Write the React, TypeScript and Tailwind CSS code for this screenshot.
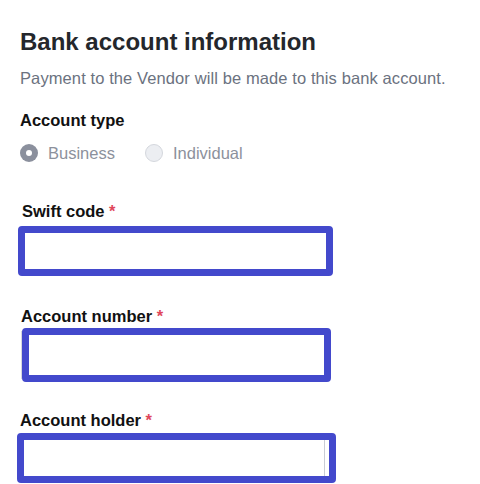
import * as React from "react";

function Label({ text, className }: { text: string; className?: string }) {
  return (
    <label className={"block text-[16.5px] font-bold leading-6 text-[#111111] " + (className ?? "")}>
      {text} <span className="text-[#e0475b]">*</span>
    </label>
  );
}

function Radio({ checked }: { checked: boolean }) {
  return (
    <span
      className={
        "flex h-[18px] w-[18px] items-center justify-center rounded-full " +
        (checked ? "bg-[#8b909d]" : "border border-[#d4d7dd] bg-[#eceef2]")
      }
    >
      {checked && <span className="h-[6px] w-[6px] rounded-full bg-white" />}
    </span>
  );
}

export default function App() {
  const [type, setType] = React.useState("business");

  return (
    <div className="min-h-[484px] bg-white pl-5 pt-[26px] font-['Liberation_Sans',Arial,sans-serif]">
      <h2 className="text-[24px] font-bold leading-8 text-[#24272c]">Bank account information</h2>
      <p className="mt-2 text-[16.5px] tracking-[0.1px] leading-6 text-[#6b7280]">
        Payment to the Vendor will be made to this bank account.
      </p>

      <div className="mt-[18px] text-[16.5px] font-bold leading-6 text-[#111111]">Account type</div>
      <div className="mt-[9px] flex h-6 items-center text-[16.5px] text-[#8c919c]">
        <button onClick={() => setType("business")} className="flex items-center">
          <Radio checked={type === "business"} />
          <span className="ml-[10px]">Business</span>
        </button>
        <button onClick={() => setType("individual")} className="ml-[30px] flex items-center">
          <Radio checked={type === "individual"} />
          <span className="ml-[10px]">Individual</span>
        </button>
      </div>

      <Label text="Swift code" className="ml-[2px] mt-[34px]" />
      <input className="ml-[-2px] mt-[3px] block h-[50px] w-[315px] rounded-[4px] border-[7px] border-[#4349cc] bg-white px-2 outline-none" />

      <Label text="Account number" className="ml-[1px] mt-[28px]" />
      <div className="ml-px flex items-stretch">
        <div className="mt-[3px] mb-[3px] w-px bg-[#d6d8de]" />
        <input className="block h-[54px] w-[309px] rounded-[4px] border-[7px] border-[#4349cc] bg-white px-2 outline-none" />
      </div>

      <Label text="Account holder" className="mt-[26px]" />
      <div className="relative ml-[-3px] mt-px w-[319px]">
        <input className="block h-[50px] w-[319px] rounded-[4px] border-[7px] border-[#4349cc] bg-white px-2 outline-none" />
        <div className="pointer-events-none absolute right-[11px] top-[7px] h-[36px] w-px bg-[#c9ccd4]" />
      </div>
    </div>
  );
}
